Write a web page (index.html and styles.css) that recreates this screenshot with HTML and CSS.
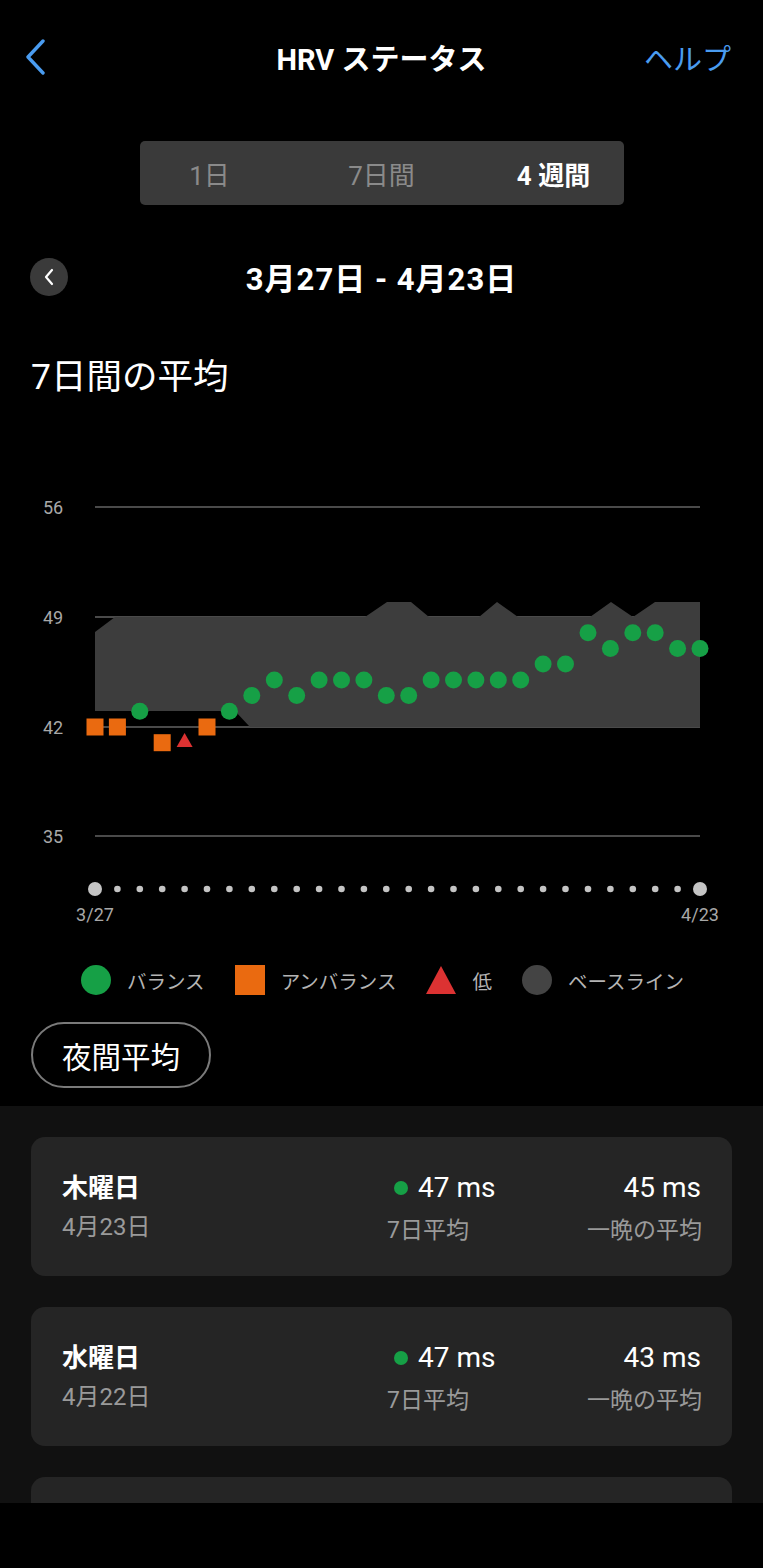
FILE: index.html
```html
<!DOCTYPE html>
<html lang="ja">
<head>
    <meta charset="utf-8">
    <title>HRVステータス</title>
    <link rel="stylesheet" href="styles.css">
</head>
<body>
    <div class="screen">
        <header class="topbar">
            <div class="topbar-left">
                <svg class="back-icon" width="22" height="36" viewBox="0 0 22 36">
                    <polyline points="18,2 3,18 18,34" fill="none" stroke="#4a9cf0" stroke-width="3.4" stroke-linecap="round" stroke-linejoin="round"/>
                </svg>
            </div>
            <h1 class="topbar-title">HRV ステータス</h1>
            <div class="topbar-right">ヘルプ</div>
        </header>

        <div class="segments">
            <div class="segment">1日</div>
            <div class="segment">7日間</div>
            <div class="segment active">4 週間</div>
        </div>

        <div class="date-row">
            <div class="date-left">
                <div class="prev-btn">
                    <svg width="12" height="18" viewBox="0 0 12 18">
                        <polyline points="9,2 3,9 9,16" fill="none" stroke="#fff" stroke-width="2.2" stroke-linecap="round" stroke-linejoin="round"/>
                    </svg>
                </div>
            </div>
            <div class="date-range">3月27日 - 4月23日</div>
            <div></div>
        </div>

        <h2 class="section-title">7日間の平均</h2>

        <svg class="chart" width="763" height="548" viewBox="0 397 763 548">
            <!-- grid -->
            <g stroke="#4a4a4a" stroke-width="2">
                <line x1="95" y1="507" x2="700" y2="507"/>
                <line x1="95" y1="617" x2="700" y2="617"/>
                <line x1="95" y1="727" x2="700" y2="727"/>
                <line x1="95" y1="836" x2="700" y2="836"/>
            </g>
            <g class="axis-label" text-anchor="middle" dominant-baseline="central">
                <text x="53" y="507">56</text>
                <text x="53" y="617">49</text>
                <text x="53" y="727">42</text>
                <text x="53" y="836">35</text>
            </g>

            <!-- baseline -->
            <polygon fill="#3d3d3d" points="95,632 115,617 365,617 387,602 411,602 429,617 479,617 497,602 518,617 590,617 611,602 633,617 655,602 700,602 700,727 250,727 235,711 95,711"/>

            <!-- unbalanced / low -->
            <g fill="#ea6a10">
                <rect x="86.5" y="718.5" width="17" height="17"/>
                <rect x="108.9" y="718.5" width="17" height="17"/>
                <rect x="153.7" y="734.2" width="17" height="17"/>
                <rect x="198.5" y="718.5" width="17" height="17"/>
            </g>
            <polygon fill="#dc3232" points="184.6,733 192.6,747 176.6,747"/>

            <!-- balanced -->
            <g fill="#16a046">
                <circle cx="139.8" cy="711.3" r="8.5"/>
                <circle cx="229.4" cy="711.3" r="8.5"/>
                <circle cx="251.8" cy="695.6" r="8.5"/>
                <circle cx="274.3" cy="679.9" r="8.5"/>
                <circle cx="296.7" cy="695.6" r="8.5"/>
                <circle cx="319.1" cy="679.9" r="8.5"/>
                <circle cx="341.5" cy="679.9" r="8.5"/>
                <circle cx="363.9" cy="679.9" r="8.5"/>
                <circle cx="386.3" cy="695.6" r="8.5"/>
                <circle cx="408.7" cy="695.6" r="8.5"/>
                <circle cx="431.1" cy="679.9" r="8.5"/>
                <circle cx="453.5" cy="679.9" r="8.5"/>
                <circle cx="475.9" cy="679.9" r="8.5"/>
                <circle cx="498.3" cy="679.9" r="8.5"/>
                <circle cx="520.7" cy="679.9" r="8.5"/>
                <circle cx="543.1" cy="664.1" r="8.5"/>
                <circle cx="565.5" cy="664.1" r="8.5"/>
                <circle cx="588" cy="632.7" r="8.5"/>
                <circle cx="610.4" cy="648.4" r="8.5"/>
                <circle cx="632.8" cy="632.7" r="8.5"/>
                <circle cx="655.2" cy="632.7" r="8.5"/>
                <circle cx="677.6" cy="648.4" r="8.5"/>
                <circle cx="700" cy="648.4" r="8.5"/>
            </g>

            <!-- day dots -->
            <g fill="#c4c4c4">
                <circle cx="95" cy="889" r="7"/>
                <circle cx="117.4" cy="889" r="3.3"/>
                <circle cx="139.8" cy="889" r="3.3"/>
                <circle cx="162.2" cy="889" r="3.3"/>
                <circle cx="184.6" cy="889" r="3.3"/>
                <circle cx="207" cy="889" r="3.3"/>
                <circle cx="229.4" cy="889" r="3.3"/>
                <circle cx="251.8" cy="889" r="3.3"/>
                <circle cx="274.3" cy="889" r="3.3"/>
                <circle cx="296.7" cy="889" r="3.3"/>
                <circle cx="319.1" cy="889" r="3.3"/>
                <circle cx="341.5" cy="889" r="3.3"/>
                <circle cx="363.9" cy="889" r="3.3"/>
                <circle cx="386.3" cy="889" r="3.3"/>
                <circle cx="408.7" cy="889" r="3.3"/>
                <circle cx="431.1" cy="889" r="3.3"/>
                <circle cx="453.5" cy="889" r="3.3"/>
                <circle cx="475.9" cy="889" r="3.3"/>
                <circle cx="498.3" cy="889" r="3.3"/>
                <circle cx="520.7" cy="889" r="3.3"/>
                <circle cx="543.1" cy="889" r="3.3"/>
                <circle cx="565.5" cy="889" r="3.3"/>
                <circle cx="588" cy="889" r="3.3"/>
                <circle cx="610.4" cy="889" r="3.3"/>
                <circle cx="632.8" cy="889" r="3.3"/>
                <circle cx="655.2" cy="889" r="3.3"/>
                <circle cx="677.6" cy="889" r="3.3"/>
                <circle cx="700" cy="889" r="7"/>
            </g>
            <g class="axis-label" text-anchor="middle" dominant-baseline="central">
                <text x="95" y="914">3/27</text>
                <text x="700" y="914">4/23</text>
            </g>
        </svg>

        <div class="legend">
            <div class="legend-item">
                <span class="mark mark-green"></span>バランス
            </div>
            <div class="legend-item">
                <span class="mark mark-orange"></span>アンバランス
            </div>
            <div class="legend-item">
                <svg class="mark" width="32" height="30" viewBox="0 0 32 30">
                    <polygon points="16,0 32,30 0,30" fill="#dc3232"/>
                </svg>低
            </div>
            <div class="legend-item">
                <span class="mark mark-gray"></span>ベースライン
            </div>
        </div>

        <div class="pill">夜間平均</div>

        <section class="days">
            <div class="day-card">
                <div class="day-name">木曜日</div>
                <div class="day-avg"><span class="dot"></span>47 ms</div>
                <div class="day-night">45 ms</div>
                <div class="day-date">4月23日</div>
                <div class="day-sub">7日平均</div>
                <div class="day-sub right">一晩の平均</div>
            </div>
            <div class="day-card">
                <div class="day-name">水曜日</div>
                <div class="day-avg"><span class="dot"></span>47 ms</div>
                <div class="day-night">43 ms</div>
                <div class="day-date">4月22日</div>
                <div class="day-sub">7日平均</div>
                <div class="day-sub right">一晩の平均</div>
            </div>
            <div class="day-card"></div>
        </section>
    </div>
</body>
</html>
```

FILE: styles.css
```css
body {
    margin: 0;
    background: #000;
    color: #fff;
    font-family: Roboto, "Noto Sans CJK JP", sans-serif;
}
.screen { width: 763px; height: 1568px; overflow: hidden; }

.topbar {
    height: 114px;
    display: grid;
    grid-template-columns: 1fr auto 1fr;
    align-items: center;
}
.topbar-left { padding-left: 25px; display: flex; }
.topbar-title { margin: 0; font-size: 29px; font-weight: 700; }
.topbar-right {
    text-align: right;
    padding-right: 32px;
    font-size: 29px;
    color: #4a9cf0;
}

.segments {
    margin: 27px auto 0;
    width: 484px;
    height: 64px;
    background: #3a3a3a;
    border-radius: 5px;
    display: grid;
    grid-template-columns: repeat(3, 140px);
    column-gap: 32px;
    align-items: center;
}
.segment { text-align: center; font-size: 26px; color: #8a8a8a; }
.segment.active { color: #fff; font-weight: 700; }

.date-row {
    margin-top: 49px;
    height: 38px;
    display: grid;
    grid-template-columns: 1fr auto 1fr;
    align-items: center;
}
.date-left { padding-left: 30px; }
.prev-btn {
    width: 38px;
    height: 38px;
    border-radius: 50%;
    background: #3a3a3a;
    display: flex;
    align-items: center;
    justify-content: center;
}
.date-range { font-size: 31px; font-weight: 700; letter-spacing: 1px; }

.section-title {
    margin: 65px 0 0;
    padding-left: 31px;
    font-size: 35.5px;
    font-weight: 400;
    line-height: 40px;
}

.chart { display: block; }
.axis-label { fill: #a8a8a8; font-size: 18px; font-family: Roboto, sans-serif; }

.legend {
    margin-top: 20px;
    padding-left: 81px;
    display: flex;
    align-items: center;
    gap: 30px;
    font-size: 19.5px;
    color: #b4b4b4;
}
.legend-item { display: flex; align-items: center; gap: 16px; }
.mark { display: block; width: 30px; height: 30px; }
.mark-green { background: #16a046; border-radius: 50%; }
.mark-orange { background: #ea6a10; }
.mark-gray { background: #444; border-radius: 50%; }

.pill {
    margin: 27px 0 0 31px;
    width: 176px;
    height: 62px;
    border: 2px solid #7a7a7a;
    border-radius: 33px;
    display: flex;
    align-items: center;
    justify-content: center;
    font-size: 29.5px;
}

.days {
    margin-top: 18px;
    height: 397px;
    overflow: hidden;
    background: #111;
    padding: 31px 31px 0;
    box-sizing: border-box;
    display: flex;
    flex-direction: column;
    gap: 31px;
}
.day-card {
    flex: none;
    height: 139px;
    box-sizing: border-box;
    background: #252525;
    border-radius: 14px;
    padding: 35px 31px 0;
    display: grid;
    grid-template-columns: 1fr 200px 114px;
    grid-template-rows: 32px 54px;
}
.day-name { font-size: 26px; font-weight: 700; line-height: 32px; }
.day-date { font-size: 24px; color: #9a9a9a; line-height: 46px; }
.day-avg { font-size: 28px; line-height: 32px; display: flex; align-items: center; }
.dot {
    width: 14px;
    height: 14px;
    border-radius: 50%;
    background: #16a046;
    margin: 0 10px 0 7px;
}
.day-night { font-size: 28px; line-height: 32px; text-align: right; }
.day-sub { font-size: 23px; color: #9a9a9a; line-height: 54px; white-space: nowrap; }
.day-sub.right { text-align: right; }
```
